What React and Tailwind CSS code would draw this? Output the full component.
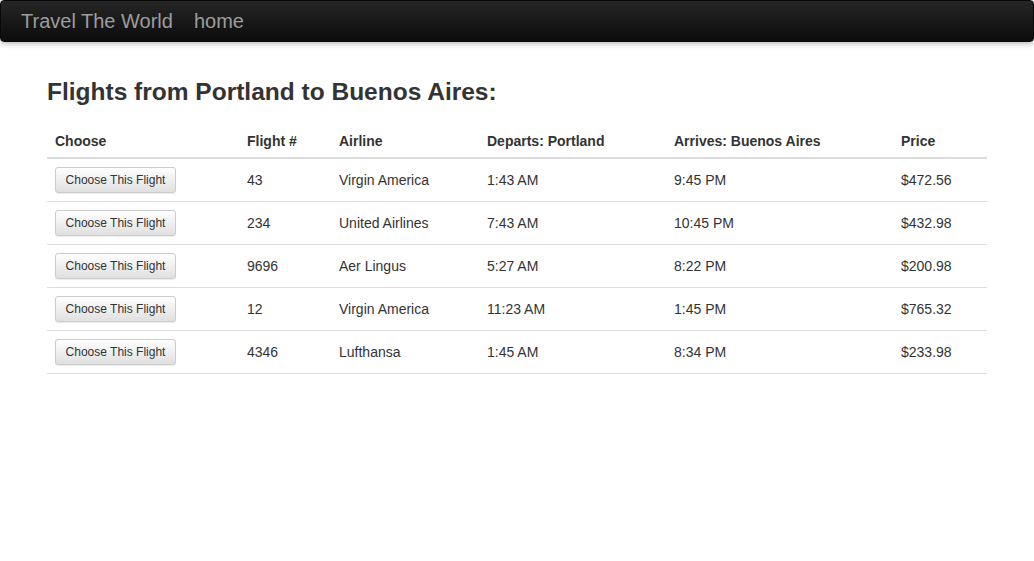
import React from "react";

const flights = [
  ["43", "Virgin America", "1:43 AM", "9:45 PM", "$472.56"],
  ["234", "United Airlines", "7:43 AM", "10:45 PM", "$432.98"],
  ["9696", "Aer Lingus", "5:27 AM", "8:22 PM", "$200.98"],
  ["12", "Virgin America", "11:23 AM", "1:45 PM", "$765.32"],
  ["4346", "Lufthansa", "1:45 AM", "8:34 PM", "$233.98"],
];

export default function App() {
  return (
    <div className="min-h-[561px] bg-white text-[#333] text-[14px] font-['Liberation_Sans',Arial,sans-serif]">
      <nav className="h-[42px] rounded-[4px] border border-[#080808] bg-gradient-to-b from-[#262626] to-[#0c0c0c] shadow-[0_1px_6px_rgba(0,0,0,0.35)] flex items-center pl-[20px]">
        <span className="text-[20px] text-[#9d9d9d] leading-none">Travel The World</span>
        <span className="text-[20px] text-[#9d9d9d] leading-none ml-[21px]">home</span>
      </nav>
      <div className="w-[940px] mx-auto">
        <h3 className="mt-[37px] mb-[17px] text-[24.5px] font-bold leading-[26px]">
          Flights from Portland to Buenos Aires:
        </h3>
        <table className="w-[940px] border-collapse table-fixed">
          <colgroup>
            <col className="w-[192px]" />
            <col className="w-[92px]" />
            <col className="w-[148px]" />
            <col className="w-[187px]" />
            <col className="w-[227px]" />
            <col className="w-[94px]" />
          </colgroup>
          <thead>
            <tr className="border-b-2 border-[#ddd] text-left">
              <th className="pt-[9px] pb-[6px] px-2 leading-[20px] font-bold">Choose</th>
              <th className="pt-[9px] pb-[6px] px-2 leading-[20px] font-bold">Flight #</th>
              <th className="pt-[9px] pb-[6px] px-2 leading-[20px] font-bold">Airline</th>
              <th className="pt-[9px] pb-[6px] px-2 leading-[20px] font-bold">Departs: Portland</th>
              <th className="pt-[9px] pb-[6px] px-2 leading-[20px] font-bold">Arrives: Buenos Aires</th>
              <th className="pt-[9px] pb-[6px] px-2 leading-[20px] font-bold">Price</th>
            </tr>
          </thead>
          <tbody>
            {flights.map((f, i) => (
              <tr key={i} className="border-b border-[#ddd]">
                <td className="p-2 align-middle">
                  <button className="h-[26px] w-[121px] text-[12px] leading-[18px] text-[#333] border border-[#ccc] rounded-[3px] bg-gradient-to-b from-white to-[#e0e0e0] shadow-[inset_0_1px_0_rgba(255,255,255,0.15),0_1px_1px_rgba(0,0,0,0.075)]">
                    Choose This Flight
                  </button>
                </td>
                {f.map((v, j) => (
                  <td key={j} className="p-2 leading-[20px] align-middle">{v}</td>
                ))}
              </tr>
            ))}
          </tbody>
        </table>
      </div>
    </div>
  );
}
